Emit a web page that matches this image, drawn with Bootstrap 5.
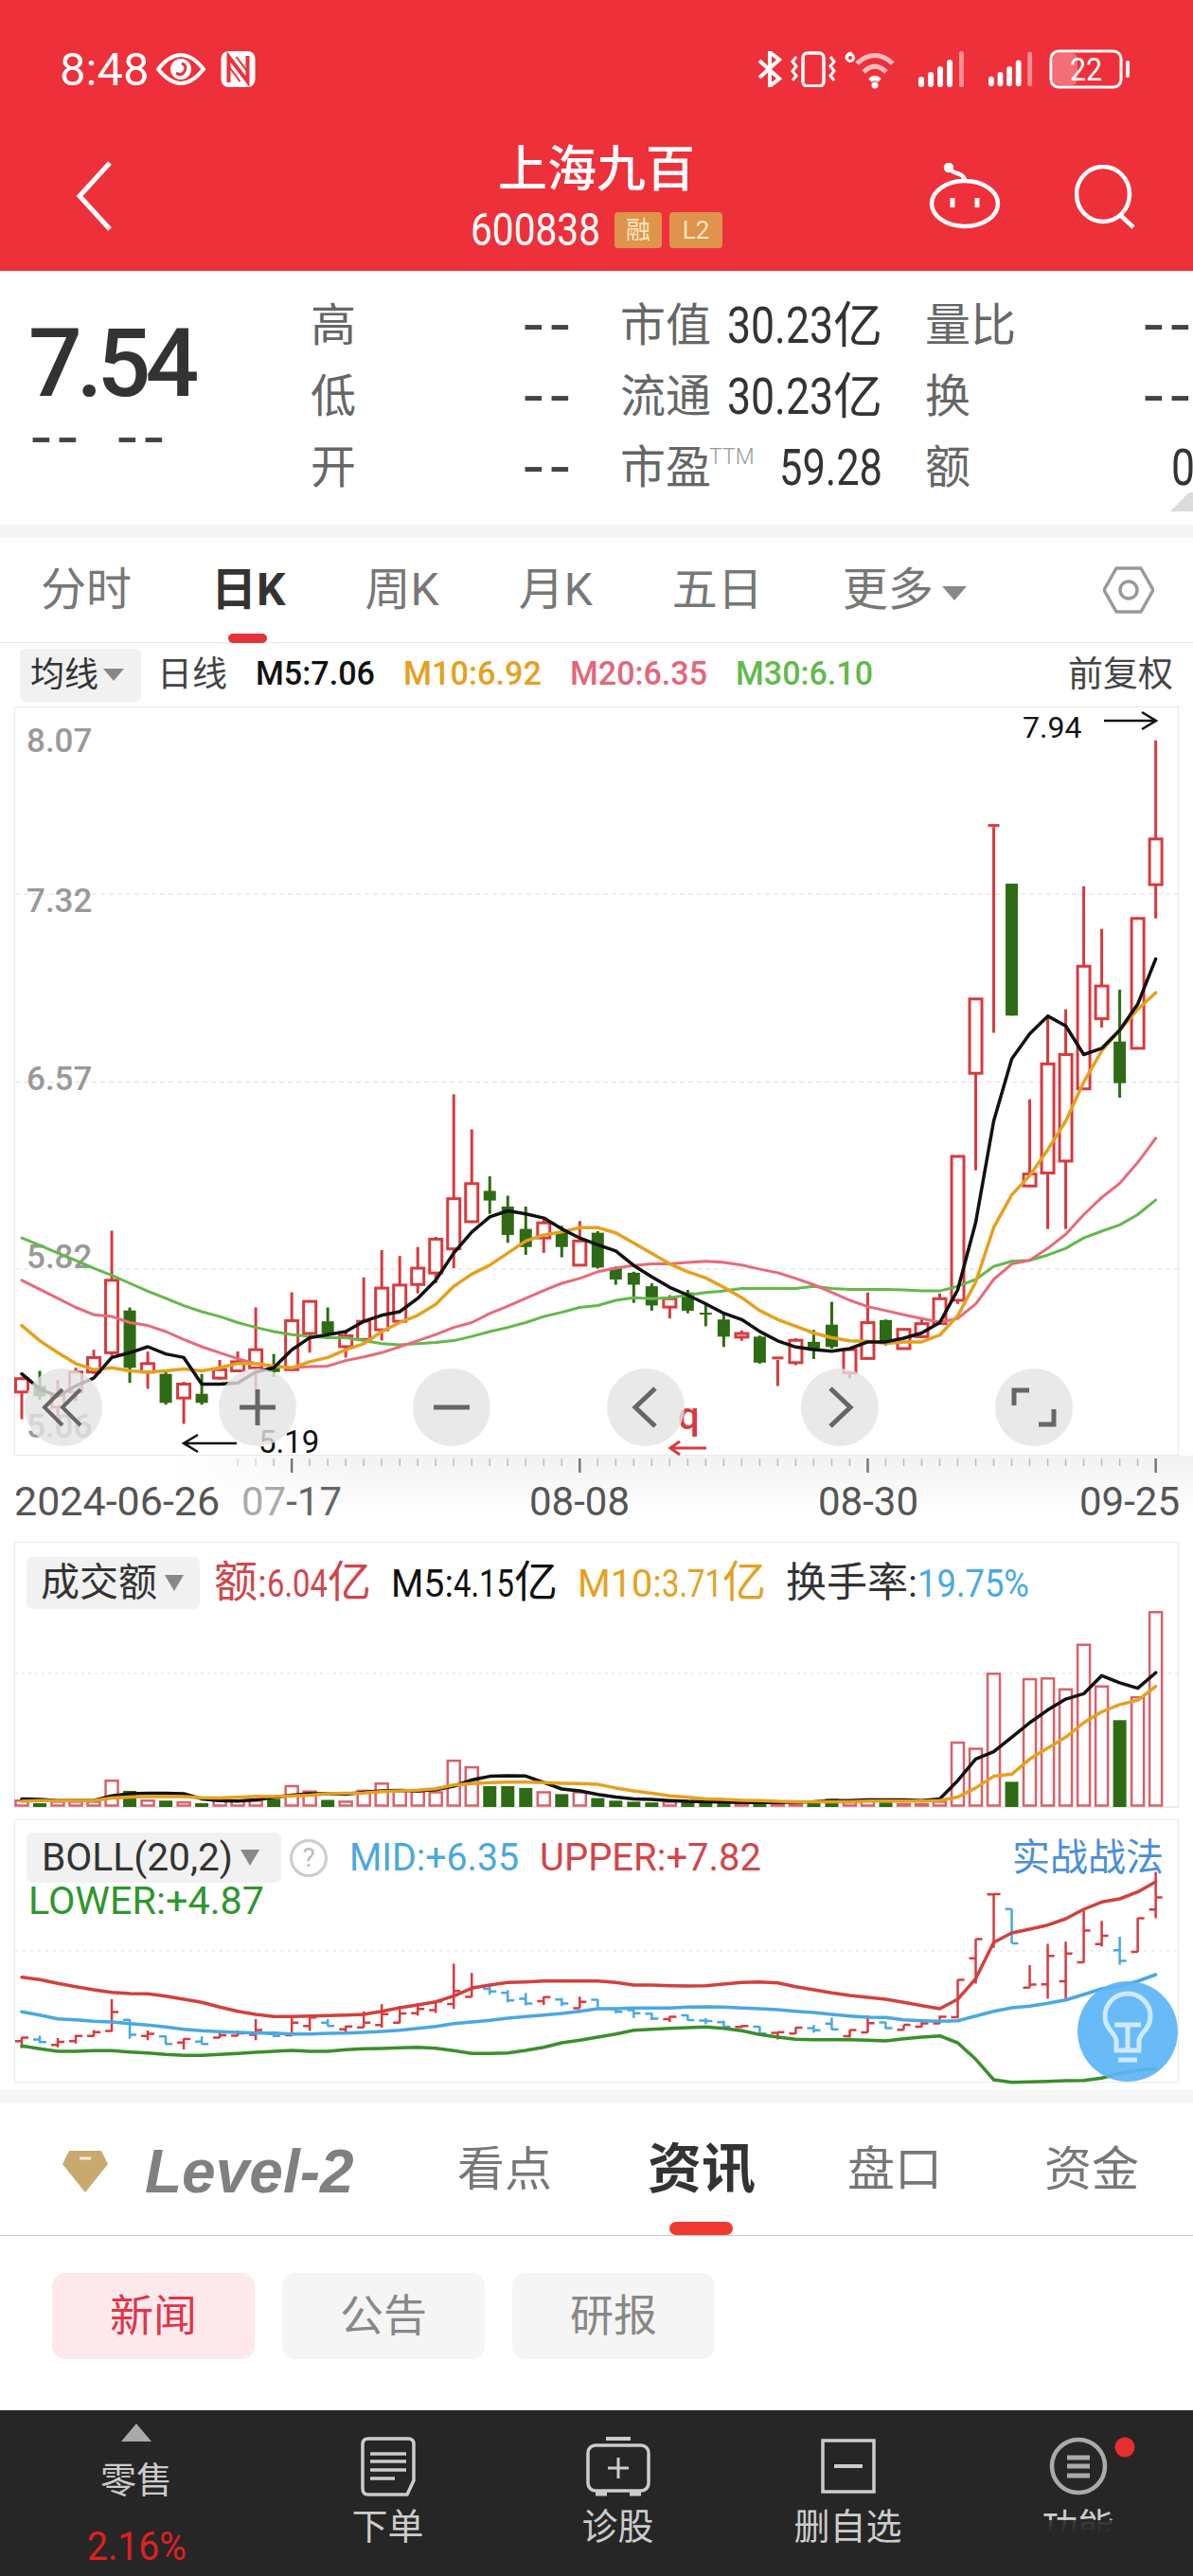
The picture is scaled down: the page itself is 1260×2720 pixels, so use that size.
<!DOCTYPE html>
<html lang="zh">
<head>
<meta charset="UTF-8">
<title>上海九百</title>
<link href="https://cdn.jsdelivr.net/npm/bootstrap@5.3.3/dist/css/bootstrap.min.css" rel="stylesheet">
<style>
  html, body { margin: 0; background: #fff; }
  body { width: 1260px; height: 2720px; overflow: hidden; font-family: Roboto, "Noto Sans CJK SC", sans-serif; color: #333; }
  svg { display: block; }
  .sq { display: inline-block; transform-origin: left center; white-space: nowrap; }

  /* top red header */
  .app-head { height: 286px; background: #ee303a; color: #fff; }
  .status-row { height: 146px; padding: 0 66px 0 63px; }
  .clock { font-size: 49px; line-height: 1; }
  .title-row { height: 140px; }
  .head-side { width: 200px; flex: none; }
  .back-arrow { margin: 24px 0 0 80px; }
  .stock-name { font-size: 52px; line-height: 60px; font-weight: 500; margin-top: 4px; }
  .stock-code { font-size: 49px; line-height: 50px; margin-top: 8px; gap: 15px; }
  .tag-box { width: 50px; height: 38px; background: #e0934a; color: #fde7c4; border-radius: 4px; font: 400 26px/38px Roboto, "Noto Sans CJK SC", sans-serif; text-align: center; }
  .tag-box + .tag-box { width: 56px; margin-left: 8px; }
  .robot-ico { position: absolute; left: -80px; top: 26px; }
  .search-ico { position: absolute; left: 75px; top: 28px; }

  /* quote block */
  .quote-box { height: 268px; position: relative; overflow: hidden; }
  .price-col { width: 328px; flex: none; padding: 48px 0 0 30px; }
  .big-price { font-size: 100px; line-height: 100px; font-weight: 500; letter-spacing: -6px; color: #333; }
  .dash-txt { font-size: 44px; font-weight: 700; line-height: 30px; height: 30px; letter-spacing: 2px; color: #444; }
  .price-col .dash-txt { margin: 14px 0 0 1px; display: flex; gap: 35px; }
  .quote-rows { flex: none; padding-top: 20px; }
  .quote-line { height: 75px; gap: 43px; }
  .q-cell { flex: none; font-size: 48px; line-height: 75px; color: #666; white-space: nowrap; }
  .q-a { width: 279px; }
  .q-b { width: 277px; }
  .q-c { width: 285px; margin-left: 2px; }
  .quote-line > .q-b { margin-left: 5px; }
  .q-val { font-size: 52px; color: #333; }
  .q-val .sq { font-size: 54px; }
  .ttm { font-size: 23px; font-weight: 300; color: #999; position: relative; top: -20px; margin-left: -2px; }
  .corner-mark { position: absolute; right: 0; bottom: 14px; width: 28px; height: 20px; background: linear-gradient(135deg, transparent 50%, #dcdcdc 50%); }
  .gray-bar { height: 14px; background: #f5f5f5; }

  /* period tabs */
  .period-tabs { height: 111px; padding-left: 43px; gap: 84px; border-bottom: 1px solid #e6e6e6; font-size: 48px; color: #777; }
  .period-tab { position: relative; line-height: 46px; white-space: nowrap; }
  .period-on { font-weight: 700; color: #333; }
  .period-on::after { content: ""; position: absolute; left: 18px; bottom: -33px; width: 41px; height: 10px; border-radius: 5px; background: #e53238; }
  .caret { display: inline-block; width: 0; height: 0; border-left: 13px solid transparent; border-right: 13px solid transparent; border-top: 15px solid #888; vertical-align: middle; margin-left: 9px; }
  .hex-ico { margin-right: 41px; }

  /* ma legend */
  .ma-legend { height: 67px; padding: 0 21px 0 21px; gap: 30px; font-size: 35px; font-weight: 500; }
  .pick-chip { background: #f1f1f1; border-radius: 6px; color: #333; font-weight: 400; flex: none; }
  .ma-legend .pick-chip { width: 128px; height: 56px; font-size: 36px; padding-left: 11px; margin-right: -13px; }
  .ma-legend .caret { margin-left: 5px; border-left-width: 11px; border-right-width: 11px; border-top-width: 13px; }
  .cjk36 { font-size: 37px; font-weight: 400; color: #444; }
  .c-ma10 { color: #e5a11e; } .c-ma20 { color: #e2677b; } .c-ma30 { color: #63b94b; } .c-blk { color: #111; }

  /* chart frames */
  .chart-frame { position: relative; margin: 0 15px; border: 1px solid #e9e9e9; }
  .chart-canvas { position: absolute; left: -16px; top: -1px; }
  .main-frame { height: 791px; }
  .vol-frame { height: 281px; padding: 13px 0 0 12px; }
  .boll-frame { height: 278px; margin-top: 12px; padding: 13px 15px 0 12px; }
  .axis-wrap { height: 91px; background: linear-gradient(90deg, #fff 14%, rgba(255,255,255,0) 30%), linear-gradient(180deg, #f2f2f2, #fff 70%); }
  .zoom-row { position: absolute; left: 10px; top: 698px; gap: 123px; }
  .zoom-btn { width: 82px; height: 82px; background: rgba(228,228,228,.8); }

  .ind-legend { position: relative; font-size: 41px; line-height: 56px; gap: 21px; white-space: nowrap; }
  .han { font-size: 46px; }
  .han-rate { font-size: 43px; }
  .vol-frame .pick-chip { width: 183px; height: 55px; font-size: 41px; padding-left: 15px; margin-right: -6px; }
  .vol-frame .pick-chip .caret, .boll-frame .pick-chip .caret { border-left-width: 10px; border-right-width: 10px; border-top-width: 17px; margin-left: 8px; }
  .c-red { color: #d2454b; } .c-blue { color: #4aa8e0; } .c-green { color: #2f962e; }
  .boll-frame .pick-chip { width: 269px; height: 53px; font-size: 40px; padding-left: 16px; white-space: nowrap; }
  .boll-line { position: relative; font-size: 40px; line-height: 53px; }
  .boll-low { position: relative; font-size: 40px; line-height: 40px; margin-left: 2px; }
  .help-dot { width: 40px; height: 40px; margin: 0 23px 0 9px; border: 3px solid #ccc; border-radius: 50%; color: #bbb; font-size: 28px; line-height: 34px; text-align: center; flex: none; }
  .upper-val { margin-left: 22px; }
  .tactic-link { font-size: 40px; color: #4a8fd8; }
  .bulb-btn { position: absolute; left: 1121px; top: 169px; }

  /* lower tabs */
  .bottom-gap { height: 8px; }
  .info-tabs { height: 140px; border-bottom: 1px solid #ccc; position: relative; font-size: 50px; color: #777; }
  .level-wrap { padding: 40px 0 0 66px; }
  .level-txt { font: italic 700 64px/1 "Liberation Sans", sans-serif; color: #808080; margin-left: 39px; }
  .info-tab { position: absolute; top: 40px; line-height: 60px; }
  .tab-kd { left: 483px; } .tab-zx { left: 684px; font-size: 57px; font-weight: 700; color: #333; }
  .tab-pk { left: 895px; } .tab-zj { left: 1103px; }
  .tab-zx::after { content: ""; position: absolute; left: 23px; bottom: -39px; width: 67px; height: 14px; border-radius: 7px; background: #f03a30; }
  .chips-zone { height: 184px; padding: 39px 0 0 55px; gap: 29px; }
  .sub-chip { width: 214px; height: 91px; border: 0; border-radius: 14px; background: #f5f5f5; color: #888; font-size: 46px; padding: 0; }
  .sub-on, .sub-on:hover { background: #fde9ec; color: #e0354a; }

  /* dark bottom bar */
  .dock { position: relative; height: 176px; background: #262626; color: #ccc; display: grid; grid-template-columns: 288px repeat(4, 243px); font-size: 38px; }
  .dock-col { display: flex; flex-direction: column; align-items: center; padding-top: 28px; }
  .dock-col > span { line-height: 50px; margin-top: 6px; white-space: nowrap; }
  .dock-first { padding-top: 14px; }
  .dock-first > span { margin-top: 16px; }
  .dock-first .dock-pct { margin-top: 20px; color: #e02020; font-size: 42px; }
  .mark-tri { width: 0; height: 0; border-left: 16px solid transparent; border-right: 16px solid transparent; border-bottom: 19px solid #aaa; }
  .blur-patch { position: absolute; left: 965px; top: 116px; width: 295px; height: 60px; background: linear-gradient(180deg, rgba(38,38,38,.85), #262626 25%); }
</style>
</head>
<body>

<!-- header -->
<header class="app-head">
  <div class="status-row d-flex align-items-center">
    <span class="clock">8:48</span>
    <svg class="ms-2" width="52" height="37" viewBox="0 0 52 37" fill="none" stroke="#fff" stroke-width="4"><path d="M2 18Q26-12 50 18 26 48 2 18Z"/><circle cx="26" cy="18" r="11" fill="#fff" stroke="none"/><path d="M21 22q6 4 9-2t-3-8" stroke="#ee303a" stroke-width="3"/></svg>
    <svg class="ms-3" width="37" height="38" viewBox="0 0 36 38"><rect width="36" height="38" rx="8" fill="#fff"/><path d="M8 33V6l20 26V5" fill="none" stroke="#ee303a" stroke-width="4"/><path d="M16 6l12 16M8 16l12 16" stroke="#ee303a" stroke-width="2"/></svg>
    <svg class="ms-auto" width="26" height="38" viewBox="0 0 26 38" fill="none" stroke="#fff" stroke-width="4"><path d="M2 10l21 19-10 8V1l10 8L2 28"/></svg>
    <svg class="ms-2" width="50" height="38" viewBox="0 0 50 38" fill="none" stroke="#fff" stroke-width="3.5"><rect x="14" y="2" width="22" height="35" rx="5"/><path d="M7 6l-4 5 4 5-4 5 4 5-4 5M43 6l4 5-4 5 4 5-4 5 4 5" stroke-width="3"/></svg>
    <svg class="ms-2" width="54" height="42" viewBox="0 0 54 42" fill="none" stroke="#fff"><path d="M2 10c0-4 2-6 6-6" stroke-width="3"/><circle cx="6" cy="9" r="3.5" stroke-width="3"/><path d="M13 15Q32-2 51 15" stroke="#fbb" stroke-width="5"/><path d="M20 24Q32 12 44 24" stroke="#fbb" stroke-width="5"/><path d="M27 33Q32 28 37 33" stroke-width="5"/><circle cx="32" cy="38" r="3.5" fill="#fff" stroke="none"/></svg>
    <svg class="ms-4" width="50" height="38" viewBox="0 0 50 38" fill="#fff"><rect y="27" width="6" height="11" rx="3"/><rect x="10" y="22" width="6" height="16" rx="3"/><rect x="20" y="16" width="6" height="22" rx="3"/><rect x="30" y="9" width="6" height="29" rx="3"/><rect x="43" width="5" height="38" rx="2" opacity=".45"/></svg>
    <svg class="ms-4" width="48" height="38" viewBox="0 0 50 38" fill="#fff"><rect y="27" width="6" height="11" rx="3"/><rect x="10" y="22" width="6" height="16" rx="3"/><rect x="20" y="16" width="6" height="22" rx="3"/><rect x="30" y="9" width="6" height="29" rx="3"/><rect x="43" width="5" height="38" rx="2" opacity=".45"/></svg>
    <svg class="ms-3" width="86" height="42" viewBox="0 0 86 42"><rect x="2" y="2" width="74" height="38" rx="8" fill="none" stroke="#fff" stroke-width="3"/><rect x="4" y="4" width="26" height="34" rx="6" fill="#fff" opacity=".3"/><rect x="81" y="12" width="4" height="18" rx="2" fill="#fff"/><text x="39" y="33" text-anchor="middle" fill="#fff" font-size="34" textLength="34" lengthAdjust="spacingAndGlyphs" font-family="Roboto">22</text></svg>
  </div>
  <div class="title-row d-flex">
    <div class="head-side">
      <svg class="back-arrow" width="42" height="74" viewBox="0 0 42 74" fill="none" stroke="#fff" stroke-width="5"><path d="M36 2L4 37l32 35"/></svg>
    </div>
    <div class="flex-grow-1 text-center">
      <div class="stock-name">上海九百</div>
      <div class="stock-code d-flex justify-content-center align-items-center"><span class="sq" data-w="137">600838</span><span class="d-flex"><i class="tag-box fst-normal">融</i><i class="tag-box fst-normal">L2</i></span></div>
    </div>
    <div class="head-side position-relative">
      <svg class="robot-ico" width="78" height="70" viewBox="0 0 78 70" fill="none" stroke="#fff" stroke-width="4.5"><ellipse cx="39" cy="43" rx="35" ry="24"/><path d="M39 19C38 10 28 12 25 8"/><circle cx="22" cy="5" r="3" fill="#fff"/><path d="M26 37v10M52 37v10" stroke-width="5"/></svg>
      <svg class="search-ico" width="66" height="68" viewBox="0 0 66 68" fill="none" stroke="#fff" stroke-width="4.5"><ellipse cx="30" cy="31" rx="28" ry="29"/><path d="M48 53l14 13"/></svg>
    </div>
  </div>
</header>

<!-- quote -->
<section class="quote-box d-flex">
  <div class="price-col">
    <div class="big-price">7.54</div>
    <div class="dash-txt"><span class="sq" data-w="56">--</span><span class="sq" data-w="56">--</span></div>
  </div>
  <div class="quote-rows">
    <div class="quote-line d-flex">
      <div class="q-cell q-a d-flex justify-content-between"><span>高</span><span class="dash-txt align-self-center"><span class="sq" data-w="56">--</span></span></div>
      <div class="q-cell q-b d-flex justify-content-between"><span>市值</span><span class="q-val"><span class="sq" data-w="112">30.23</span>亿</span></div>
      <div class="q-cell q-c d-flex justify-content-between"><span>量比</span><span class="dash-txt align-self-center"><span class="sq" data-w="56">--</span></span></div>
    </div>
    <div class="quote-line d-flex">
      <div class="q-cell q-a d-flex justify-content-between"><span>低</span><span class="dash-txt align-self-center"><span class="sq" data-w="56">--</span></span></div>
      <div class="q-cell q-b d-flex justify-content-between"><span>流通</span><span class="q-val"><span class="sq" data-w="112">30.23</span>亿</span></div>
      <div class="q-cell q-c d-flex justify-content-between"><span>换</span><span class="dash-txt align-self-center"><span class="sq" data-w="56">--</span></span></div>
    </div>
    <div class="quote-line d-flex">
      <div class="q-cell q-a d-flex justify-content-between"><span>开</span><span class="dash-txt align-self-center"><span class="sq" data-w="56">--</span></span></div>
      <div class="q-cell q-b d-flex justify-content-between"><span>市盈<span class="ttm">TTM</span></span><span class="q-val"><span class="sq" data-w="109">59.28</span></span></div>
      <div class="q-cell q-c d-flex justify-content-between"><span>额</span><span class="q-val"><span class="sq" data-w="25">0</span></span></div>
    </div>
  </div>
  <div class="corner-mark"></div>
</section>
<div class="gray-bar"></div>

<!-- period tabs -->
<div class="period-tabs d-flex align-items-center">
  <span class="period-tab">分时</span>
  <span class="period-tab period-on">日K</span>
  <span class="period-tab">周K</span>
  <span class="period-tab">月K</span>
  <span class="period-tab">五日</span>
  <span class="period-tab">更多<i class="caret"></i></span>
  <svg class="ms-auto hex-ico" width="54" height="54" viewBox="0 0 54 54" fill="none" stroke="#999" stroke-width="3.5"><path d="M14 4h26l13 23-13 23H14L1 27z" stroke-linejoin="round"/><circle cx="27" cy="27" r="9"/></svg>
</div>

<!-- ma legend -->
<div class="ma-legend d-flex align-items-center">
  <div class="pick-chip d-flex align-items-center">均线<i class="caret"></i></div>
  <span class="cjk36">日线</span>
  <span class="c-blk sq" data-w="126">M5:7.06</span>
  <span class="c-ma10 sq" data-w="146">M10:6.92</span>
  <span class="c-ma20 sq" data-w="145">M20:6.35</span>
  <span class="c-ma30 sq" data-w="145">M30:6.10</span>
  <span class="cjk36 ms-auto">前复权</span>
</div>

<!-- k chart -->
<div class="chart-frame main-frame">
  <svg id="mainChart" class="chart-canvas" width="1260" height="793" viewBox="0 745 1260 793"></svg>
  <div class="zoom-row d-flex">
    <div class="zoom-btn rounded-circle d-flex align-items-center justify-content-center"><svg width="50" height="50" viewBox="0 0 50 50" fill="none" stroke="#666" stroke-width="4"><path d="M24 6L5 25l19 19M43 6L24 25l19 19"/></svg></div>
    <div class="zoom-btn rounded-circle d-flex align-items-center justify-content-center"><svg width="50" height="50" viewBox="0 0 50 50" fill="none" stroke="#666" stroke-width="5"><path d="M6 25h38M25 6v38"/></svg></div>
    <div class="zoom-btn rounded-circle d-flex align-items-center justify-content-center"><svg width="50" height="50" viewBox="0 0 50 50" fill="none" stroke="#666" stroke-width="5"><path d="M6 25h38"/></svg></div>
    <div class="zoom-btn rounded-circle d-flex align-items-center justify-content-center"><svg width="50" height="50" viewBox="0 0 50 50" fill="none" stroke="#666" stroke-width="5"><path d="M35 5L14 25l21 20"/></svg></div>
    <div class="zoom-btn rounded-circle d-flex align-items-center justify-content-center"><svg width="50" height="50" viewBox="0 0 50 50" fill="none" stroke="#666" stroke-width="5"><path d="M15 5l21 20-21 20"/></svg></div>
    <div class="zoom-btn rounded-circle d-flex align-items-center justify-content-center"><svg width="50" height="50" viewBox="0 0 50 50" fill="none" stroke="#666" stroke-width="5"><path d="M20 7H4v16M30 43h16V27"/></svg></div>
  </div>
</div>
<div class="axis-wrap"><svg id="axisChart" width="1260" height="91" viewBox="0 1537 1260 91"></svg></div>

<!-- volume -->
<div class="chart-frame vol-frame">
  <svg id="volChart" class="chart-canvas" width="1260" height="283" viewBox="0 1628 1260 283"></svg>
  <div class="ind-legend d-flex align-items-center">
    <div class="pick-chip d-flex align-items-center">成交额<i class="caret"></i></div>
    <span class="c-red"><span class="han">额</span>:<span class="sq" data-w="64">6.04</span><span class="han">亿</span></span>
    <span class="c-blk"><span class="sq" data-w="66">M5:</span><span class="sq" data-w="64">4.15</span><span class="han">亿</span></span>
    <span class="c-ma10"><span class="sq" data-w="89">M10:</span><span class="sq" data-w="64">3.71</span><span class="han">亿</span></span>
    <span><span class="han-rate">换手率</span>:<span class="c-blue sq" data-w="118">19.75%</span></span>
  </div>
</div>

<!-- boll -->
<div class="chart-frame boll-frame">
  <svg id="bollChart" class="chart-canvas" width="1260" height="280" viewBox="0 1920 1260 280"></svg>
  <div class="boll-line d-flex align-items-center">
    <div class="pick-chip d-flex align-items-center"><span class="sq" data-w="202">BOLL(20,2)</span><i class="caret"></i></div>
    <div class="help-dot">?</div>
    <span class="c-blue sq" data-w="179">MID:+6.35</span>
    <span class="c-red sq upper-val" data-w="234">UPPER:+7.82</span>
    <span class="tactic-link ms-auto">实战战法</span>
  </div>
  <div class="boll-low c-green"><span class="sq" data-w="249">LOWER:+4.87</span></div>
  <svg class="bulb-btn" width="108" height="108" viewBox="0 0 108 108"><circle cx="54" cy="54" r="53" fill="#5cb5f6" fill-opacity=".92"/><path d="M42 64c0-8-12-12-12-26a24 24 0 0148 0c0 14-12 18-12 26v10H42z" fill="none" stroke="#cfe9fd" stroke-width="5"/><path d="M40 47h28M54 47v26M44 84h20" stroke="#cfe9fd" stroke-width="5"/></svg>
</div>
<div class="bottom-gap"></div>
<div class="gray-bar"></div>

<!-- info tabs -->
<div class="info-tabs">
  <div class="level-wrap d-flex align-items-center">
    <svg width="48" height="44" viewBox="0 0 48 44"><path d="M7 0h34l7 14-24 30L0 14z" fill="#c8a96e"/><path d="M18 8h12" stroke="#f4ead6" stroke-width="3"/></svg>
    <span class="level-txt">Level-2</span>
  </div>
  <span class="info-tab tab-kd">看点</span>
  <span class="info-tab tab-zx">资讯</span>
  <span class="info-tab tab-pk">盘口</span>
  <span class="info-tab tab-zj">资金</span>
</div>

<div class="chips-zone d-flex align-items-start">
  <button class="btn sub-chip sub-on">新闻</button>
  <button class="btn sub-chip">公告</button>
  <button class="btn sub-chip">研报</button>
</div>

<!-- dock -->
<footer class="dock">
  <div class="dock-col dock-first">
    <i class="mark-tri"></i>
    <span>零售</span>
    <span class="dock-pct"><span class="sq" data-w="105">2.16%</span></span>
  </div>
  <div class="dock-col">
    <svg width="58" height="64" viewBox="0 0 58 64" fill="none" stroke="#ccc" stroke-width="3.5"><path d="M8 2h42q6 0 6 6v38l-7 15H8q-6 0-6-6V8q0-6 6-6z"/><path d="M10 18h38M10 26h38M10 35h38M10 44h26"/></svg>
    <span>下单</span>
  </div>
  <div class="dock-col">
    <svg width="68" height="64" viewBox="0 0 68 64" fill="none" stroke="#ccc" stroke-width="3.5"><path d="M21 2h26" stroke-width="4"/><rect x="2" y="9" width="64" height="48" rx="8"/><path d="M34 22v22M23 33h22" stroke-width="3"/><path d="M10 60h12M46 60h12" stroke-width="5"/></svg>
    <span>诊股</span>
  </div>
  <div class="dock-col">
    <svg width="58" height="64" viewBox="0 0 58 64" fill="none" stroke="#ccc" stroke-width="3.5"><rect x="2" y="4" width="54" height="54"/><path d="M14 31h30" stroke-width="4"/></svg>
    <span>删自选</span>
  </div>
  <div class="dock-col">
    <svg width="120" height="64" viewBox="0 0 120 64" fill="none" stroke="#aaa"><circle cx="60" cy="31" r="28" stroke-width="4.5"/><path d="M48 22h24M48 31h24M48 41h24" stroke-width="5"/><circle cx="109" cy="11" r="10.5" fill="#e62e2e" stroke="none"/></svg>
    <span>功能</span>
  </div>
  <div class="blur-patch"></div>
</footer>

<script>
  document.querySelectorAll('.sq').forEach(el => {
    const w = el.getBoundingClientRect().width, target = +el.dataset.w;
    el.style.transform = `scaleX(${target / w})`;
    el.style.marginRight = `${target - w}px`;
  });

  // candle data read from the picture: [type, wick top, body top, body bottom, wick bottom]
  // index 0-31 in one scale, 32-63 in another
  const rawA = [
    ['r',1400,1403,1425,1470],['g',1390,1415,1432,1438],['r',1405,1430,1450,1465],['r',1385,1392,1425,1440],
    ['r',1355,1368,1392,1395],['r',1158,1240,1360,1365],['g',1285,1290,1385,1410],['r',1358,1378,1392,1420],
    ['g',1390,1395,1443,1446],['r',1408,1412,1435,1478],['g',1395,1428,1443,1446],['r',1372,1388,1402,1405],
    ['r',1358,1375,1390,1392],['r',1285,1355,1385,1420],['g',1362,1380,1392,1400],['r',1260,1307,1388,1390],
    ['r',1273,1275,1328,1360],['g',1285,1308,1328,1330],['r',1325,1332,1350,1368],['r',1235,1308,1338,1340],
    ['r',1190,1253,1322,1340],['r',1200,1248,1308,1310],['r',1185,1220,1247,1262],['r',1168,1172,1228,1245],
    ['r',932,1105,1188,1220],['r',990,1080,1143,1145],['g',1068,1092,1108,1130],['g',1100,1118,1165,1178],
    ['g',1118,1155,1185,1198],['r',1140,1145,1170,1195],['g',1150,1160,1185,1202],['r',1142,1175,1215,1216]
  ];
  const rawB = [
    ['g',1092,1095,1162,1164],['g',1160,1162,1185,1195],['g',1170,1172,1195,1230],['g',1192,1198,1235,1245],
    ['r',1215,1222,1238,1260],['g',1205,1210,1245,1250],['g',1232,1249,1252,1275],['g',1250,1262,1295,1315],
    ['r',1283,1289,1296,1303],['g',1293,1295,1345,1347],['r',1335,1336,1340,1390],['r',1298,1302,1345,1350],
    ['g',1282,1305,1322,1338],['g',1228,1272,1315,1318],['r',1318,1320,1365,1375],['r',1210,1268,1337,1338],
    ['g',1262,1263,1305,1312],['r',1280,1281,1318,1319],['r',1260,1270,1295,1298],['r',1212,1222,1270,1272],
    ['r',946,948,1225,1232],['r',643,645,788,975],['r',310,311,314,710],['g',423,423,677,677],
    ['r',838,982,1005,1006],['r',680,770,980,1088],['r',665,752,957,1088],['r',428,582,818,820],
    ['r',510,620,683,700],['g',627,727,807,835],['r',488,490,740,741],['r',147,337,425,490]
  ];
  const ya = z => 560 + z / 1.568, yb = z => 700 + z / 1.823;
  const cx = i => 23 + 19.01 * i;
  const candles = rawA.map(c => [c[0], ...c.slice(1).map(ya)]).concat(rawB.map(c => [c[0], ...c.slice(1).map(yb)]));

  const RED = '#d83a3e', GRN = '#2f6b14', BLU = '#4aa8e0';
  const line = (pts, color, w) => `<polyline points="${pts.map((y, i) => cx(i).toFixed(1) + ',' + y.toFixed(1)).join(' ')}" fill="none" stroke="${color}" stroke-width="${w}" stroke-linejoin="round" stroke-linecap="round"/>`;
  const both = (a, b) => a.map(ya).concat(b.map(yb));

  const ma5 = both([1395,1420,1432,1415,1402,1368,1360,1350,1362,1368,1412,1412,1410,1392,1385,1355,1335,1330,1325,1308,1298,1292,1270,1240,1195,1160,1135,1125,1130,1137,1155,1170],
    [1118,1130,1158,1180,1200,1215,1232,1250,1262,1285,1303,1315,1320,1323,1318,1305,1305,1298,1288,1268,1205,1075,880,760,712,678,697,752,740,705,655,568]);
  const ma10 = both([1315,1340,1360,1378,1388,1385,1390,1392,1390,1387,1390,1385,1378,1378,1382,1385,1375,1368,1355,1345,1325,1310,1298,1280,1250,1230,1215,1195,1175,1165,1160,1153],
    [1085,1095,1115,1135,1155,1170,1182,1200,1220,1245,1262,1275,1288,1297,1303,1304,1308,1305,1305,1292,1255,1190,1085,1022,985,935,880,805,745,705,665,633]);
  const ma20 = both([1240,1255,1270,1285,1297,1300,1310,1315,1325,1338,1350,1360,1370,1378,1383,1385,1383,1382,1373,1367,1360,1350,1340,1330,1318,1310,1295,1283,1270,1257,1245,1237],
    [1170,1163,1158,1155,1155,1152,1150,1152,1157,1165,1172,1183,1195,1210,1225,1237,1245,1253,1260,1267,1260,1232,1185,1155,1148,1125,1098,1060,1027,1000,960,913]);
  const ma30 = both([1170,1182,1195,1207,1220,1232,1245,1258,1270,1282,1292,1300,1310,1318,1325,1330,1333,1335,1335,1340,1345,1347,1345,1343,1340,1333,1325,1318,1310,1300,1293,1285],
    [1235,1225,1220,1222,1220,1215,1210,1207,1202,1202,1202,1202,1198,1202,1204,1204,1204,1205,1207,1207,1198,1185,1160,1150,1148,1138,1125,1105,1092,1080,1060,1032]);

  // main k chart
  let s = '';
  [943, 1141.5, 1339].forEach(y => s += `<line x1="16" x2="1244" y1="${y}" y2="${y}" stroke="#ddd" stroke-dasharray="5 4"/>`);
  [['8.07',793],['7.32',962],['6.57',1150],['5.82',1338],['5.06',1517]].forEach(t => s += `<text x="28" y="${t[1]}" font-size="35" font-weight="500" fill="#999" font-family="Roboto">${t[0]}</text>`);
  candles.forEach((c, i) => {
    const x = cx(i);
    if (c[0] === 'r') {
      s += `<path d="M${x} ${c[1]}V${c[2]}M${x} ${c[3]}V${c[4]}" stroke="${RED}" stroke-width="3"/>`;
      s += c[3] - c[2] < 3 ? `<path d="M${x - 6} ${c[2]}H${x + 6}" stroke="${RED}" stroke-width="3"/>` : `<rect x="${x - 6.5}" y="${c[2]}" width="13" height="${c[3] - c[2]}" fill="#fff" stroke="${RED}" stroke-width="3"/>`;
    } else {
      s += `<path d="M${x} ${c[1]}V${c[4]}" stroke="${GRN}" stroke-width="3"/><rect x="${x - 6.5}" y="${c[2]}" width="13" height="${Math.max(c[3] - c[2], 2)}" fill="${GRN}"/>`;
    }
  });
  s += line(ma30, '#63b94b', 3) + line(ma20, '#e86a7a', 3) + line(ma10, '#e5a11e', 3.5) + line(ma5, '#111', 3.5);
  s += `<text x="1080" y="778" font-size="32" fill="#111" font-family="Roboto">7.94</text><path d="M1166 760h54M1206 751l15 9-15 9" fill="none" stroke="#111" stroke-width="2.5"/>`;
  s += `<text x="273" y="1533" font-size="33" fill="#111" font-family="Roboto">5.19</text><path d="M250 1523h-56M209 1514l-15 9 15 9" fill="none" stroke="#111" stroke-width="2.5"/>`;
  s += `<text x="716" y="1508" font-size="40" font-weight="500" fill="${RED}" font-family="Roboto">q</text><path d="M746 1528h-38M718 1521l-10 7 10 7" fill="none" stroke="${RED}" stroke-width="3"/>`;
  mainChart.innerHTML = s;

  // axis ticks and dates
  let a = '';
  for (let i = 12; i < 64; i++) {
    const major = (i - 15) % 16 === 0;
    a += `<line x1="${cx(i)}" x2="${cx(i)}" y1="1540" y2="${major ? 1555 : 1548}" stroke="${major ? '#777' : '#bbb'}" stroke-width="${major ? 2.5 : 1.5}" opacity="${i < 14 ? .5 : 1}"/>`;
  }
  a += `<text x="15" y="1600" font-size="43" fill="#555" font-family="Roboto">2024-06-26</text>`;
  a += `<text x="308" y="1600" font-size="42" text-anchor="middle" fill="#666" font-family="Roboto"><tspan fill="#aaa">07</tspan>-17</text>`;
  a += `<text x="612" y="1600" font-size="42" text-anchor="middle" fill="#555" font-family="Roboto">08-08</text>`;
  a += `<text x="917" y="1600" font-size="42" text-anchor="middle" fill="#555" font-family="Roboto">08-30</text>`;
  a += `<text x="1246" y="1600" font-size="42" text-anchor="end" fill="#555" font-family="Roboto">09-25</text>`;
  axisChart.innerHTML = a;

  // volume bars
  const yv = z => 1620 + z / 2.613;
  const vol = [735,742,738,738,738,680,708,735,735,740,742,735,735,735,730,695,710,733,738,708,688,708,710,712,625,643,695,695,700,712,717,712,728,735,738,740,738,740,742,740,742,738,745,745,742,730,740,732,740,745,745,738,575,592,385,683,400,398,428,305,420,513,450,215];
  const vBlack = [730,732,735,735,735,722,716,715,715,716,730,735,736,733,726,720,716,716,717,712,708,707,708,705,695,678,668,666,667,685,703,708,718,725,730,732,735,737,738,739,740,740,740,739,738,735,735,733,733,733,735,730,680,620,600,560,520,485,455,440,390,410,425,382];
  const vOrange = [737,735,735,735,735,728,725,724,724,724,727,728,726,723,724,722,720,716,715,714,710,708,706,702,692,688,685,684,684,685,687,688,690,700,708,715,722,726,730,732,734,735,737,738,738,738,738,736,736,736,736,735,725,700,668,662,620,590,560,520,490,470,458,420];
  let v = `<line x1="16" x2="1244" y1="1767" y2="1767" stroke="#ddd" stroke-dasharray="3 4"/><line x1="16" x2="1244" y1="1907.5" y2="1907.5" stroke="#eee"/>`;
  vol.forEach((z, i) => {
    const x = cx(i), top = yv(z);
    v += candles[i][0] === 'r'
      ? `<rect x="${x - 6.5}" y="${top}" width="13" height="${1906.5 - top}" fill="#fff" stroke="#d9616a" stroke-width="2.5"/>`
      : `<rect x="${x - 7}" y="${top}" width="14" height="${1908 - top}" fill="${GRN}"/>`;
  });
  v += line(vBlack.map(yv), '#111', 3.5) + line(vOrange.map(yv), '#e5a11e', 3.5);
  volChart.innerHTML = v;

  // boll: high/low bars plus the three bands
  const yc = z => 1880 + z / 3, yd = z => 1900 + z / 3;
  const band = (a2, b2) => a2.map(yc).concat(b2.map(yd));
  const bUp = band([620,628,640,650,660,668,672,673,680,690,700,715,728,738,745,745,743,742,740,738,728,717,708,698,680,655,645,637,635,632,632,632],
    [572,577,585,585,587,588,587,582,577,575,578,590,600,610,618,624,630,640,650,660,630,565,450,420,408,395,375,345,322,312,290,258]);
  const bMid = band([730,740,752,755,760,762,767,772,778,785,790,793,795,797,797,800,800,798,797,795,792,788,782,776,767,762,757,750,745,740,735,728],
    [660,660,658,658,658,655,654,655,658,660,663,668,672,678,683,687,688,695,698,700,698,683,668,657,652,643,632,615,597,587,573,552]);
  const bLow = band([838,847,855,855,853,853,857,860,865,868,868,865,862,858,855,852,855,855,850,847,846,844,842,845,853,862,862,860,852,842,828,820],
    [750,740,728,725,722,720,718,722,730,742,750,757,758,758,758,760,762,755,750,746,768,820,885,893,892,890,888,887,880,865,855,850]);
  const toBoll = y => 1999 + (y - 871) * .2596;
  let b = `<line x1="16" x2="1244" y1="2059" y2="2059" stroke="#ddd" stroke-dasharray="3 5"/>`;
  candles.forEach((c, i) => {
    const x = cx(i), col = c[0] === 'r' ? RED : BLU;
    const hi = toBoll(c[1]), lo = toBoll(c[4]), t = toBoll(c[2]), bt = toBoll(c[3]);
    const open = c[0] === 'r' ? bt : t, close = c[0] === 'r' ? t : bt;
    b += `<path d="M${x} ${hi}V${lo}M${x - 7} ${open}H${x}M${x} ${close}H${x + 7}" fill="none" stroke="${col}" stroke-width="2.5"/>`;
  });
  b += line(bLow, '#3b8f2a', 3.5) + line(bMid, BLU, 3.5) + line(bUp, '#d2403f', 3.5);
  bollChart.innerHTML = b;
</script>
<script src="https://cdn.jsdelivr.net/npm/bootstrap@5.3.3/dist/js/bootstrap.bundle.min.js"></script>
</body>
</html>
